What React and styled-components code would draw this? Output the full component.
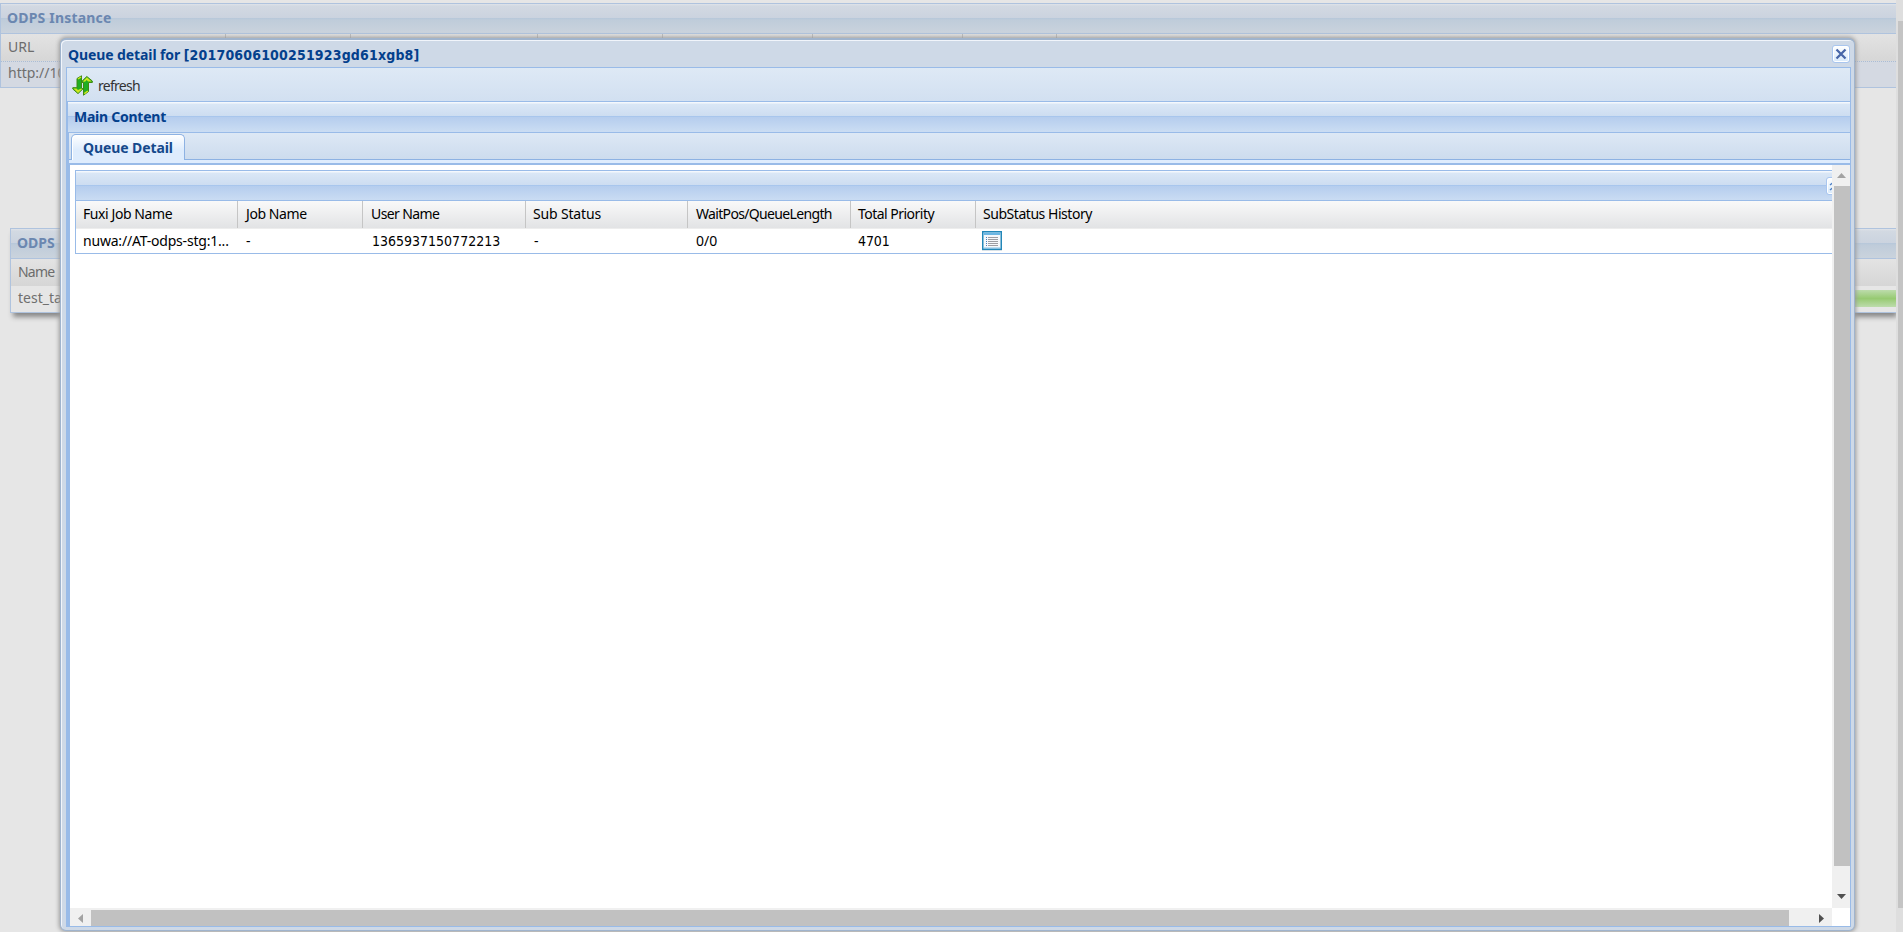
import React from 'react';
import styled, { createGlobalStyle } from 'styled-components';

const Global = createGlobalStyle`
  *{box-sizing:border-box}
  html,body{margin:0;height:100%;overflow:hidden}
  body{background:#e6e6e6;font:14px "Noto Sans","Open Sans",sans-serif;color:#111}
`;
const Page = styled.div`position:relative;height:932px;width:1903px;display:flex;overflow:hidden;`;
const Backdrop = styled.div`width:1896px;display:flex;flex-direction:column;padding-top:3px;`;
const BackPanel = styled.section`
  border:1px solid #afc3de;border-right:0;
  margin:${p => p.$margin || 0};
  box-shadow:${p => (p.$shadow ? '2px 5px 5px -1px #888' : 'none')};
`;
const BackHeader = styled.header`
  height:30px;padding-left:6px;line-height:28px;
  border-bottom:1px solid #afc3de;
  background:linear-gradient(#dfe3e9 0,#d2d9e2 2px,#cbd3df 14px,#b6c7da 14px,#bfccda 16px,#cad3dd 29px);
  color:#6b87b0;
`;
const BackCols = styled.div`
  display:flex;height:${p => p.$h}px;line-height:25px;color:#6c6c6c;
  background:linear-gradient(#e3e3e3,#d6d6d6);
`;
const BackCol = styled.div`width:${p => p.$w}px;padding-left:7px;border-right:${p => (p.$last ? 0 : 1)}px solid #bdbdbd;`;
const BackRow = styled.div`
  display:flex;align-items:center;height:${p => p.$h}px;padding-left:7px;line-height:18px;color:#6f6f6f;
  background:${p => (p.$selected ? '#d4d9e2' : '#e6e6e6')};
  border-top:${p => (p.$selected ? '1px dotted #abbdd4' : 0)};
  & > span{margin-top:-3px}
`;
const Progress = styled.div`flex:1;height:17px;margin:-1px 0 0 60px;background:linear-gradient(#bddcac,#97ca72 50%,#bddcac);`;
const PageBar = styled.div`width:7px;background:#dedede;padding:21px 0 24px 2px;`;
const PageThumb = styled.div`height:100%;background:#c4c4c4;`;

const Window = styled.div`
  position:absolute;left:60px;top:38px;width:1795px;height:893px;
  display:flex;flex-direction:column;padding:0 3px 3px 5px;
  border:1px solid #a0b4cd;border-top-width:2px;border-radius:6px;
  background:#ced9e7;box-shadow:inset 1px 1px 0 #f1f5fb,0 0 4px 1px #9a9a9a;
`;
const TitleBar = styled.div`height:27px;flex:none;display:flex;justify-content:space-between;align-items:center;padding:1px 1px 0 2px;color:#04408c;`;
const Text = styled.span`
  white-space:nowrap;letter-spacing:${p => p.$ls || 0}px;
  font-weight:${p => (p.$bold ? 700 : 400)};
`;
const Digits = styled.span`font-family:"DejaVu Sans Condensed","DejaVu Sans",sans-serif;font-stretch:condensed;font-size:${p => p.$size || 14}px;letter-spacing:${p => p.$ls || 0}px;`;
const Tool = styled.button`
  width:18px;height:18px;flex:none;padding:0;border:1px solid #a9c6ef;border-radius:3px;
  margin:${p => p.$margin || 0};
  background:linear-gradient(#fff,#d7e9fb);box-shadow:inset 0 0 0 1px #fff;display:flex;align-items:center;justify-content:center;
`;
const Body = styled.div`flex:1;min-height:0;display:flex;flex-direction:column;border:1px solid #99bbe8;background:#99bbe8;`;
const Toolbar = styled.div`
  height:33px;flex:none;display:flex;align-items:center;gap:5px;padding:2px 0 0 5px;color:#333;
  background:linear-gradient(#dee9f5,#d2e0f1);
`;
const PanelHeader = styled.header`
  height:${p => p.$h}px;flex:none;padding-left:${p => p.$pad}px;line-height:29px;color:#04408c;
  display:flex;justify-content:space-between;
  border-bottom:1px solid #99bbe8;
  background:linear-gradient(#f4f8fd 0,#f4f8fd 1px,#dae7f6 2px,#cdddf1 14px,#a8c6ed 14px,#a8c6ed 15px,#b5cdee 15px,#cbddf3 30px);
`;
const MainPanel = styled.div`flex:1;min-height:0;margin-top:1px;display:flex;flex-direction:column;padding-left:1px;`;
const TabBar = styled.div`
  height:27px;flex:none;margin-left:1px;padding:1px 0 0 2px;
  border-bottom:1px solid #8db2e3;background:linear-gradient(#dde8f5,#cddcee);
`;
const Tab = styled.div`
  width:114px;height:26px;border:1px solid #8db2e3;border-bottom:0;border-radius:5px 5px 0 0;
  background:linear-gradient(#fff,#deecfd 60%);box-shadow:inset 1px 1px 0 #fff;
  text-align:center;line-height:25px;color:#15498b;
`;
const TabStrip = styled.div`height:3px;flex:none;margin-left:1px;background:#deecfd;`;
const Scroller = styled.div`
  flex:1;min-height:0;margin:2px 0 0 2px;display:grid;
  grid-template-columns:minmax(0,1fr) 18px;grid-template-rows:minmax(0,1fr) 18px;background:#fff;
`;
const Viewport = styled.div`min-width:0;overflow:hidden;padding:5px 0 0 5px;`;
const Grid = styled.div`width:1775px;border:1px solid #99bbe8;`;
const Cells = styled.div`
  display:flex;height:${p => (p.$head ? 28 : 24)}px;line-height:${p => (p.$head ? 25 : 23)}px;color:#000;
  background:${p => (p.$head ? 'linear-gradient(#f9f9f9,#e2e3e5 27px,#ededed 27px)' : '#fff')};
`;
const Cell = styled.div`
  width:${p => p.$w}px;height:${p => (p.$line ? 27 : 24)}px;padding-left:${p => p.$pad || 7}px;flex:none;
  border-right:1px solid ${p => (p.$line ? '#c5c5c5' : 'transparent')};
`;
const IconSlot = styled.div`margin:2px 0 0 -1px;height:20px;line-height:0;`;
const VBar = styled.div`display:flex;flex-direction:column;align-items:flex-end;justify-content:space-between;background:#f0f0f0;`;
const HBar = styled.div`display:flex;align-items:flex-end;background:#f0f0f0;`;
const Thumb = styled.div`width:${p => p.$w}px;height:${p => p.$h}px;background:#c1c1c1;flex:none;`;
const Arrow = styled.div`width:${p => p.$w}px;height:${p => p.$h}px;padding-top:${p => p.$top || 0}px;display:flex;align-items:center;justify-content:center;flex:none;`;

const Tri = ({ d, c, w, h }) => (
  <svg width={w} height={h} viewBox={`0 0 ${w} ${h}`}><path d={d} fill={c} /></svg>
);
const RefreshIcon = () => (
  <svg width="21" height="21" viewBox="0 0 21 21">
    <path d="M5 3.500 9.500 .8V13.500H11.300L6 18.600.8 14V12.700H5Z" fill="#1fae22" stroke="#3f8a12" />
    <path d="M11.500 20.200V7.500H10V6.200L14.800 1.500 20.300 6V7.500H16.500V16.500Z" fill="#1fae22" stroke="#3f8a12" />
    <path d="M1.300 13.500H4.500L6 15 8.500 13.800H10.500L6 18ZM10.700 6.600 14.900 2.300 19.700 6.500H16L14.800 5 13 6.700Z" fill="#cfe51d" />
    <path d="M6 4 9 2M12.300 18.600 15.800 16" stroke="#cfe51d" strokeWidth="1.500" />
  </svg>
);
const ListIcon = () => (
  <svg width="20" height="20" viewBox="0 0 20 20">
    <rect x=".75" y=".75" width="18.500" height="17.500" fill="#f6f8fb" stroke="#2387b8" strokeWidth="1.500" />
    <path d="M1.500 1.500H18.500V4H1.500Z" fill="#6cb6e3" />
    <path d="M1.500 17H18.500" stroke="#82c0e5" />
    <path d="M6 6.500H16M6 8.500H16M6 10.500H16M6 12.500H16M6 14.500H16" stroke="#9d9da2" />
    <path d="M4 6.500H5M4 8.500H5M4 10.500H5M4 12.500H5M4 14.500H5" stroke="#477dc0" />
    <path d="M0 19.500H20" stroke="#d8e1e8" />
  </svg>
);

const columns = [
  { w: 162, head: 'Fuxi Job Name', ls: -0.42, pad: 7 },
  { w: 125, head: 'Job Name', ls: -0.42, pad: 8 },
  { w: 163, head: 'User Name', ls: -0.6, pad: 8 },
  { w: 162, head: 'Sub Status', ls: -0.16, pad: 7 },
  { w: 163, head: 'WaitPos/QueueLength', ls: -0.66, pad: 8 },
  { w: 125, head: 'Total Priority', ls: -0.52, pad: 7 },
  { w: 798, head: 'SubStatus History', ls: -0.46, pad: 7 },
];
const backWidths = [225, 125, 187, 125, 150, 150, 94, 830];

export default function App() {
  return (
    <Page>
      <Global />
      <Backdrop>
        <BackPanel>
          <BackHeader><Text $bold $ls={0.18}>ODPS Instance</Text></BackHeader>
          <BackCols $h={27}>
            {backWidths.map((w, i) => <BackCol key={i} $w={w} $last={i === 7}>{i === 0 && <Text>URL</Text>}</BackCol>)}
          </BackCols>
          <BackRow $selected $h={26}><Text>http://10</Text></BackRow>
        </BackPanel>
        <BackPanel $margin="140px 0 0 10px" $shadow>
          <BackHeader><Text $bold>ODPS</Text></BackHeader>
          <BackCols $h={27}><BackCol $w={1800} $last><Text $ls={-0.8}>Name</Text></BackCol></BackCols>
          <BackRow $h={26}><Text>test_ta</Text><Progress /></BackRow>
        </BackPanel>
      </Backdrop>
      <PageBar><PageThumb /></PageBar>
      <Window>
        <TitleBar>
          <Text $bold $ls={-0.1}>Queue detail for <Digits $ls={0.18}>[20170606100251923gd61xgb8]</Digits></Text>
          <Tool aria-label="Close">
            <svg width="12" height="12" viewBox="0 0 12 12"><path d="M1.500 1.500 10.500 10.500M10.500 1.500 1.500 10.500" stroke="#4866a8" strokeWidth="2.300" /></svg>
          </Tool>
        </TitleBar>
        <Body>
          <Toolbar><RefreshIcon /><Text $ls={-0.72}>refresh</Text></Toolbar>
          <MainPanel>
            <PanelHeader $h={31} $pad={6}><Text $bold $ls={-0.25}>Main Content</Text></PanelHeader>
            <TabBar><Tab><Text $bold $ls={-0.1}>Queue Detail</Text></Tab></TabBar>
            <TabStrip />
            <Scroller>
              <Viewport>
                <Grid>
                  <PanelHeader $h={30} $pad={0}><span /><Tool aria-label="Collapse" $margin="6px 5px 0 0">
                    <svg width="12" height="12" viewBox="0 0 12 12"><path d="M1 5 6 1 11 5M1 10 6 6 11 10" fill="none" stroke="#4d7fc4" strokeWidth="1.500" /></svg>
                  </Tool></PanelHeader>
                  <Cells $head>
                    {columns.map((c, i) => <Cell key={c.head} $w={c.w} $pad={c.pad} $line={i < 6}><Text $ls={c.ls}>{c.head}</Text></Cell>)}
                  </Cells>
                  <Cells>
                    <Cell $w={162}><Text $ls={-0.2}>nuwa://AT-odps-stg:1...</Text></Cell>
                    <Cell $w={125} $pad={8}><Text>-</Text></Cell>
                    <Cell $w={163} $pad={9}><Digits>1365937150772213</Digits></Cell>
                    <Cell $w={162} $pad={8}><Text>-</Text></Cell>
                    <Cell $w={163} $pad={8}><Text>0/0</Text></Cell>
                    <Cell $w={125}><Digits $ls={-0.1}>4701</Digits></Cell>
                    <Cell $w={500}><IconSlot><ListIcon /></IconSlot></Cell>
                  </Cells>
                </Grid>
              </Viewport>
              <VBar>
                <Arrow $w={18} $h={21}><Tri w={9} h={5} c="#a3a3a3" d="M0 5 4.500 0 9 5Z" /></Arrow>
                <Thumb $w={16} $h={680} />
                <Arrow $w={18} $h={42} $top={18}><Tri w={9} h={5} c="#505050" d="M0 0H9L4.500 5Z" /></Arrow>
              </VBar>
              <HBar>
                <Arrow $w={21} $h={16}><Tri w={5} h={9} c="#a3a3a3" d="M5 0V9L0 4.500Z" /></Arrow>
                <Thumb $w={1698} $h={16} />
                <Arrow $w={64} $h={16}><Tri w={5} h={9} c="#505050" d="M0 0V9L5 4.500Z" /></Arrow>
              </HBar>
            </Scroller>
          </MainPanel>
        </Body>
      </Window>
    </Page>
  );
}
